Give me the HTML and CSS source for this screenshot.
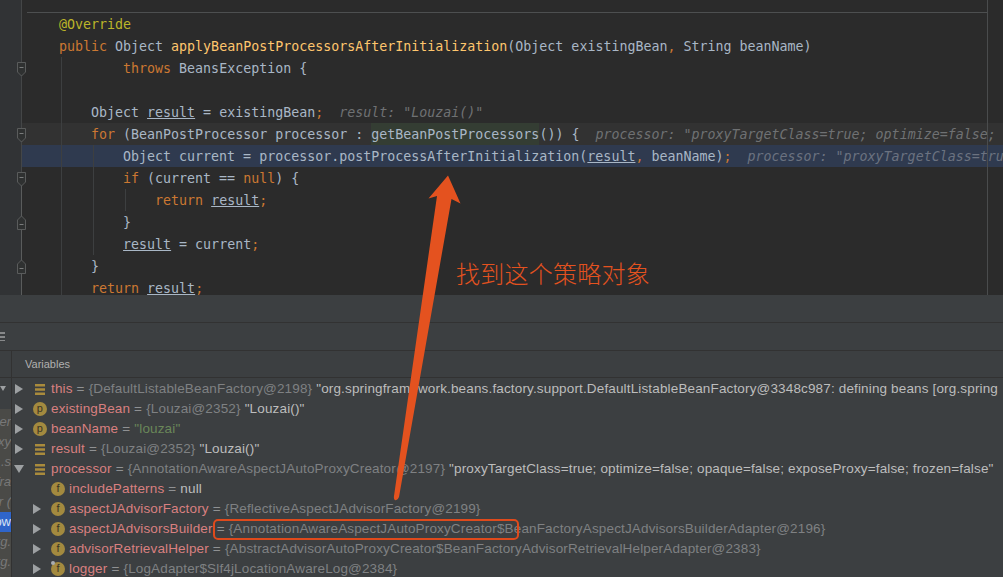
FILE: index.html
```html
<!DOCTYPE html>
<html lang="en">
<head>
<meta charset="utf-8">
<title>Debugger</title>
<link rel="stylesheet" href="styles.css">
</head>
<body>
<svg class="defs" width="0" height="0">
  <symbol id="fold-down" viewBox="0 0 10 15"><path d="M.5 .5h8v9.500l-4 4-4-4z" fill="#2f3131" stroke="#5a5c5c"/><path d="M2.500 5.500h4" stroke="#7a7c7c"/></symbol>
  <symbol id="fold-up" viewBox="0 0 10 15"><path d="M.5 14.500h8v-9.500l-4-4-4 4z" fill="#2f3131" stroke="#5a5c5c"/><path d="M2.500 9.500h4" stroke="#7a7c7c"/></symbol>
  <symbol id="tri-r" viewBox="0 0 8 10"><path d="M0 0l8 5-8 5z" fill="#9da0a2"/></symbol>
  <symbol id="tri-d" viewBox="0 0 10 8"><path d="M0 0h10l-5 8z" fill="#9da0a2"/></symbol>
  <symbol id="bars" viewBox="0 0 10 11"><path d="M0 0h10v2.600H0zM0 4.200h10v2.600H0zM0 8.400h10V11H0z" fill="#a98b3c"/></symbol>
</svg>
<div class="app">
  <section class="editor">
    <div class="gutter">
      <span class="foldline foldline-a"></span>
      <span class="foldline foldline-b"></span>
      <svg class="fold fold-1"><use href="#fold-down"/></svg>
      <svg class="fold fold-2"><use href="#fold-down"/></svg>
      <svg class="fold fold-3"><use href="#fold-down"/></svg>
      <svg class="fold fold-4"><use href="#fold-up"/></svg>
      <svg class="fold fold-5"><use href="#fold-up"/></svg>
    </div>
    <div class="code">
      <span class="guide guide-1"></span>
      <span class="guide guide-2"></span>
      <span class="guide guide-3"></span>
      <span class="margin-guide"></span>
      <div class="sep"></div>
      <div class="line"><span class="ann">@Override</span></div>
      <div class="line"><span class="kw">public</span> Object <span class="fn">applyBeanPostProcessorsAfterInitialization</span>(Object existingBean<span class="kw">,</span> String beanName)</div>
      <div class="line">        <span class="kw">throws</span> BeansException {</div>
      <div class="line"></div>
      <div class="line">    Object <u>result</u> = existingBean<span class="kw">;</span>  <i class="hint">result: "Louzai()"</i></div>
      <div class="line caret">    <span class="kw">for</span> (BeanPostProcessor processor : <span class="match">getBeanPostProcessors</span>()) {  <i class="hint">processor: "proxyTargetClass=true; optimize=false;</i></div>
      <div class="line current">        Object current = processor.postProcessAfterInitialization(<u>result</u><span class="kw">,</span> beanName)<span class="kw">;</span>  <i class="hint">processor: "proxyTargetClass=tru</i></div>
      <div class="line">        <span class="kw">if</span> (current == <span class="kw">null</span>) {</div>
      <div class="line">            <span class="kw">return</span> <u>result</u><span class="kw">;</span></div>
      <div class="line">        }</div>
      <div class="line">        <u>result</u> = current<span class="kw">;</span></div>
      <div class="line">    }</div>
      <div class="line">    <span class="kw">return</span> <u>result</u><span class="kw">;</span></div>
    </div>
  </section>
  <section class="debug">
    <div class="toolbar"></div>
    <div class="tabs"><span class="menu"></span></div>
    <div class="panes">
      <aside class="frames">
        <div class="frames-head"></div>
        <div class="frames-top"><svg class="frames-arrow"><use href="#tri-d"/></svg></div>
        <ul class="frame-list">
          <li>er</li><li>xy</li><li>.s</li><li>fra</li><li>r (</li><li class="sel">ow</li><li>rg.</li><li>rg.</li>
        </ul>
      </aside>
      <div class="vars">
        <div class="vars-head">Variables</div>
        <div class="tree">
          <div class="row"><svg class="tw"><use href="#tri-r"/></svg><svg class="bars"><use href="#bars"/></svg><span class="nm">this</span> <span class="eq">=</span> <span class="ty">{DefaultListableBeanFactory@2198}</span> <span class="val">"org.springframework.beans.factory.support.DefaultListableBeanFactory@3348c987: defining beans [org.spring</span></div>
          <div class="row"><svg class="tw"><use href="#tri-r"/></svg><span class="ic">p</span><span class="nm">existingBean</span> <span class="eq">=</span> <span class="ty">{Louzai@2352}</span> <span class="val">"Louzai()"</span></div>
          <div class="row"><svg class="tw"><use href="#tri-r"/></svg><span class="ic">p</span><span class="nm">beanName</span> <span class="eq">=</span> <span class="str">"louzai"</span></div>
          <div class="row"><svg class="tw"><use href="#tri-r"/></svg><svg class="bars"><use href="#bars"/></svg><span class="nm">result</span> <span class="eq">=</span> <span class="ty">{Louzai@2352}</span> <span class="val">"Louzai()"</span></div>
          <div class="row"><svg class="tw tw-open"><use href="#tri-d"/></svg><svg class="bars"><use href="#bars"/></svg><span class="nm">processor</span> <span class="eq">=</span> <span class="ty">{AnnotationAwareAspectJAutoProxyCreator@2197}</span> <span class="val">"proxyTargetClass=true; optimize=false; opaque=false; exposeProxy=false; frozen=false"</span></div>
          <div class="row sub"><span class="tw-gap"></span><span class="ic">f</span><span class="nm">includePatterns</span> <span class="eq">=</span> <span class="val">null</span></div>
          <div class="row sub"><svg class="tw"><use href="#tri-r"/></svg><span class="ic">f</span><span class="nm">aspectJAdvisorFactory</span> <span class="eq">=</span> <span class="ty">{ReflectiveAspectJAdvisorFactory@2199}</span></div>
          <div class="row sub"><svg class="tw"><use href="#tri-r"/></svg><span class="ic">f</span><span class="nm">aspectJAdvisorsBuilder</span> <span class="eq">=</span> <span class="ty">{AnnotationAwareAspectJAutoProxyCreator$BeanFactoryAspectJAdvisorsBuilderAdapter@2196}</span></div>
          <div class="row sub"><svg class="tw"><use href="#tri-r"/></svg><span class="ic">f</span><span class="nm">advisorRetrievalHelper</span> <span class="eq">=</span> <span class="ty">{AbstractAdvisorAutoProxyCreator$BeanFactoryAdvisorRetrievalHelperAdapter@2383}</span></div>
          <div class="row sub"><svg class="tw"><use href="#tri-r"/></svg><span class="ic ic-static">f</span><span class="nm">logger</span> <span class="eq">=</span> <span class="ty">{LogAdapter$Slf4jLocationAwareLog@2384}</span></div>
        </div>
      </div>
    </div>
  </section>
  <svg class="markup" viewBox="0 0 1003 577" width="1003" height="577">
    <path d="M448 175.500L460.500 203.500 451.500 199 399 497Q397.500 501 395 500 393.500 499.500 394 496L437 196 428.500 198.500z" fill="#e4521f"/>
    <rect x="214" y="520" width="304" height="19" rx="4" fill="none" stroke="#df4a1c" stroke-width="2"/>
  </svg>
  <div class="note">找到这个策略对象</div>
</div>
</body>
</html>
```
FILE: styles.css
```css
* { box-sizing: border-box; }
html, body { margin: 0; padding: 0; background: #3c3f41; }
body { overflow: hidden; }
.defs { position: absolute; }
.app { position: relative; width: 1003px; height: 577px; overflow: hidden; display: flex; flex-direction: column; }

/* editor */
.editor { height: 295px; display: flex; background: #313335; overflow: hidden; flex: none; }
.gutter { width: 22px; flex: none; position: relative; }
.foldline { position: absolute; left: 21px; width: 1px; }
.foldline-a { top: 0; height: 178px; background: #444647; }
.foldline-b { top: 178px; height: 117px; background: #5a5c5c; }
.fold { position: absolute; left: 17px; width: 10px; height: 15px; z-index: 2; overflow: visible; }
.fold-1 { top: 62px; }
.fold-2 { top: 128px; }
.fold-3 { top: 172px; }
.fold-4 { top: 215px; }
.fold-5 { top: 259px; }
.code { flex: 1; min-width: 0; position: relative; background: #2b2b2b; padding-top: 13px; overflow: hidden; font: 13.3px/24px "DejaVu Sans Mono", "Liberation Mono", monospace; color: #a9b7c6; }
.sep { position: absolute; left: 5px; width: 960px; top: 12px; height: 1px; background: #4d4f50; }
.margin-guide { position: absolute; left: 965px; top: 0; bottom: 0; width: 1px; background: #4a4c4d; z-index: 1; }
.guide { position: absolute; width: 1px; background: #3d3f40; z-index: 1; }
.guide-1 { left: 39px; top: 57px; bottom: 0; }
.guide-2 { left: 71px; top: 145px; height: 110px; }
.guide-3 { left: 103px; top: 189px; height: 22px; }
.line { height: 22px; padding-left: 37px; white-space: pre; }
.caret { background: #323232; }
.current { background: #2f3a4f; }
.ann { color: #bbb529; }
.kw { color: #cc7832; }
.fn { color: #ffc66d; }
.match { background: #343d33; display: inline-block; height: 22px; vertical-align: top; }
.hint { color: #6f7173; font-style: italic; }
.current .hint { color: #6b7280; }
u { text-underline-offset: 1px; text-decoration-thickness: 1px; }

/* debug tool window */
.debug { flex: 1; min-height: 0; display: flex; flex-direction: column; background: #3c3f41; }
.toolbar { height: 28px; border-bottom: 1px solid #323232; flex: none; }
.tabs { height: 28px; border-bottom: 1px solid #323232; flex: none; display: flex; align-items: center; }
.menu { width: 5px; height: 9px; background: repeating-linear-gradient(#87898a 0 2px, transparent 2px 4px); }
.panes { flex: 1; min-height: 0; display: flex; }
.frames { width: 12px; flex: none; border-right: 1px solid #323232; display: flex; flex-direction: column; overflow: hidden; }
.frames-head { height: 27px; flex: none; border-bottom: 1px solid #323232; }
.frames-top { height: 31px; flex: none; position: relative; }
.frames-arrow { position: absolute; left: 0; top: 8px; width: 6px; height: 5px; }
.frame-list { list-style: none; margin: 0; padding: 3px 0 0; background: #4a4a47; flex: 1; font: italic 13px/20px "Liberation Sans", sans-serif; color: #787878; }
.frame-list li { height: 20px; white-space: nowrap; overflow: hidden; display: flex; justify-content: flex-end; }
.frame-list .sel { background: #2f65ca; color: #d8e2f5; font-style: normal; }
.vars { flex: 1; min-width: 0; display: flex; flex-direction: column; }
.vars-head { height: 27px; flex: none; border-bottom: 1px solid #323232; padding-left: 13px; font: 11px/27px "Liberation Sans", sans-serif; color: #b0b0b0; }
.tree { flex: 1; min-height: 0; overflow: hidden; padding-top: 1px; font: 13.5px/20px "Liberation Sans", sans-serif; letter-spacing: .15px; }
.row { height: 20px; display: flex; align-items: center; white-space: pre; padding-left: 3px; }
.row > span:not(.ic):not(.tw-gap) { margin-right: 4px; }
.sub { padding-left: 21px; }
.tw { width: 8px; height: 10px; flex: none; margin-right: 10px; }
.tw-open { width: 10px; height: 8px; margin-left: -1px; margin-right: 9px; }
.tw-gap { width: 18px; flex: none; }
.bars { width: 10px; height: 11px; flex: none; margin: 0 6px 0 2px; }
.ic { width: 14px; height: 14px; flex: none; border-radius: 50%; background: #a38a3f; color: #3a3324; font: 11px/13px "Liberation Sans", sans-serif; text-align: center; margin: 0 4px 0 0; position: relative; }
.ic-static::before { content: ""; position: absolute; left: 0; top: -1px; width: 4px; height: 4px; border-radius: 50%; background: #a9adb0; }
.nm { color: #d98080; }
.eq { color: #8f9193; }
.ty { color: #7f8183; }
.val { color: #bdbdbd; }
.str { color: #6a8759; }

/* hand-drawn annotation over the screenshot */
.markup { position: absolute; left: 0; top: 0; pointer-events: none; z-index: 5; }
.note { position: absolute; left: 456px; top: 256px; z-index: 6; font: 300 24px/34px "Noto Sans CJK SC", sans-serif; letter-spacing: .25px; color: #e4521f; white-space: nowrap; }
```
